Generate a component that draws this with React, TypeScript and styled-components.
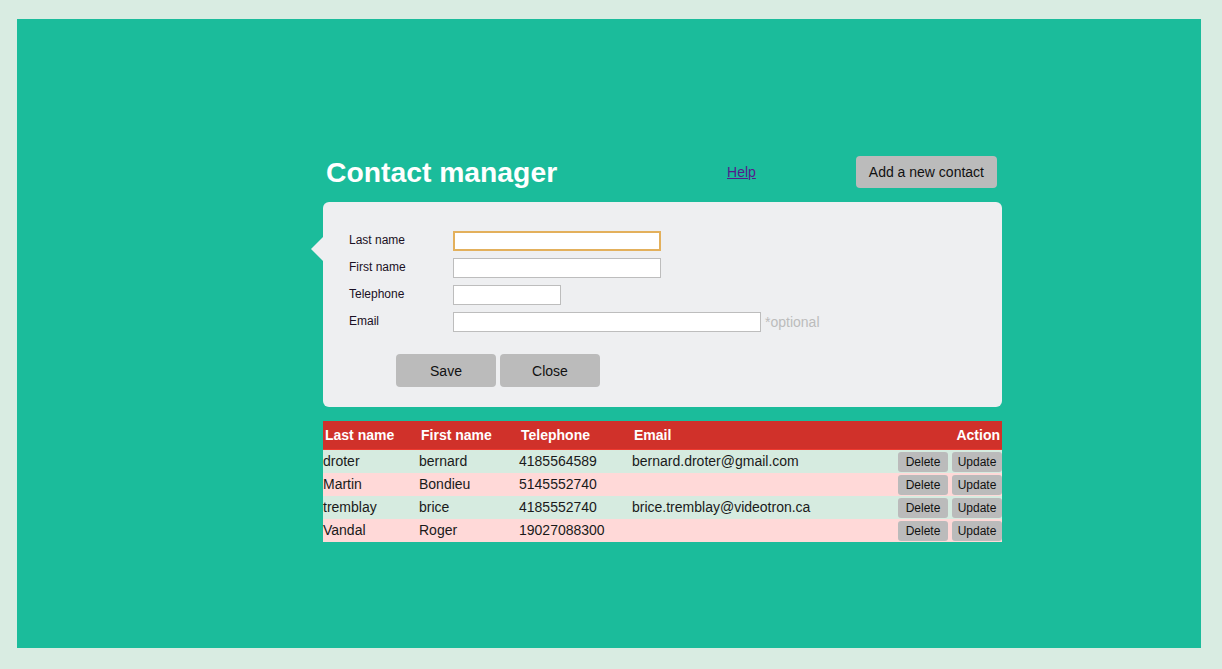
import React from "react"
import styled, { createGlobalStyle } from "styled-components"

const GlobalStyle = createGlobalStyle`
  html, body {
    margin: 0;
    padding: 0;
    background: #d9ece2;
    font-family: "Liberation Sans", Arial, sans-serif;
  }
`

const Page = styled.div`
  padding: 19px 21px 21px 17px;
`

const Stage = styled.div`
  background: #1bbc9b;
  height: 629px;
  padding-top: 137px;
  box-sizing: border-box;
`

const Column = styled.div`
  width: 679px;
  margin-left: 306px;
`

const TopBar = styled.div`
  display: flex;
  align-items: center;
  height: 32px;
`

const Title = styled.h1`
  flex: 1;
  margin: 0 0 0 3px;
  font-size: 28.3px;
  font-weight: bold;
  color: #fff;
`

const HelpLink = styled.a`
  font-size: 14px;
  color: #551a8b;
  text-decoration: underline;
  margin-right: 100px;
  cursor: pointer;
`

const GreyButton = styled.button<{ $w?: number; $h?: number; $size?: number }>`
  width: ${(p) => (p.$w ? `${p.$w}px` : "auto")};
  height: ${(p) => p.$h ?? 32}px;
  padding: 0 ${(p) => (p.$w ? 0 : 13)}px;
  background: #bbbbbb;
  border: none;
  border-radius: 4px;
  font-family: "Liberation Sans", Arial, sans-serif;
  font-size: ${(p) => p.$size ?? 14}px;
  color: #111;
  cursor: pointer;
`

const AddButton = styled(GreyButton)`
  margin-right: 5px;
`

const FormPanel = styled.div`
  position: relative;
  margin-top: 14px;
  background: #eeeff1;
  border-radius: 6px;
  padding: 29px 26px 20px;
  height: 205px;
  box-sizing: border-box;

  &::before {
    content: "";
    position: absolute;
    left: -12px;
    top: 35px;
    border-top: 12px solid transparent;
    border-bottom: 12px solid transparent;
    border-right: 12px solid #eeeff1;
  }
`

const FieldList = styled.div`
  display: flex;
  flex-direction: column;
  gap: 7px;
`

const FieldRow = styled.div`
  display: flex;
  align-items: center;
`

const Label = styled.label`
  width: 104px;
  padding-bottom: 2px;
  font-size: 12px;
  color: #1a1024;
`

const TextInput = styled.input<{ $w: number }>`
  width: ${(p) => p.$w}px;
  height: 20px;
  box-sizing: border-box;
  border: 1px solid #bdbdbd;
  background: #fff;
  padding: 0 3px;
  font-size: 13px;
  outline: none;
  caret-color: #000;

  &:focus {
    border: 2px solid #e3b05c;
    padding: 0 2px;
  }
`

const Hint = styled.span`
  margin-left: 4px;
  font-size: 14px;
  color: #bcbcbc;
`

const FormActions = styled.div`
  display: flex;
  gap: 4px;
  margin: 22px 0 0 47px;
`

const Table = styled.div`
  margin-top: 14px;
`

const GRID = "96px 100px 113px 1fr auto"

const HeadRow = styled.div`
  display: grid;
  grid-template-columns: ${GRID};
  align-items: center;
  height: 29px;
  background: #d0312a;
  border-bottom: 1px solid #ef3a2f;
  box-sizing: border-box;
`

const HeadCell = styled.div<{ $right?: boolean }>`
  padding: 0 2px;
  font-size: 14px;
  font-weight: bold;
  color: #fff;
  text-align: ${(p) => (p.$right ? "right" : "left")};
  grid-column: ${(p) => (p.$right ? "5" : "auto")};
`

const BodyRow = styled.div<{ $odd: boolean }>`
  display: grid;
  grid-template-columns: ${GRID};
  align-items: center;
  height: 23px;
  background: ${(p) => (p.$odd ? "#ffd9d8" : "#d6ebe0")};
`

const Cell = styled.div`
  padding-bottom: 2px;
  font-size: 14px;
  color: #1a1a1a;
  white-space: nowrap;
`

const RowActions = styled.div`
  display: flex;
  gap: 4px;
`

const SmallButton = styled(GreyButton)`
  border-radius: 3px;
`

const contacts = [
  { last: "droter", first: "bernard", tel: "4185564589", email: "bernard.droter@gmail.com" },
  { last: "Martin", first: "Bondieu", tel: "5145552740", email: "" },
  { last: "tremblay", first: "brice", tel: "4185552740", email: "brice.tremblay@videotron.ca" },
  { last: "Vandal", first: "Roger", tel: "19027088300", email: "" },
]

export default function App() {
  return (
    <>
      <GlobalStyle />
      <Page>
        <Stage>
          <Column>
            <TopBar>
              <Title>Contact manager</Title>
              <HelpLink>Help</HelpLink>
              <AddButton>Add a new contact</AddButton>
            </TopBar>

            <FormPanel>
              <FieldList>
                <FieldRow>
                  <Label>Last name</Label>
                  <TextInput $w={208} autoFocus />
                </FieldRow>
                <FieldRow>
                  <Label>First name</Label>
                  <TextInput $w={208} />
                </FieldRow>
                <FieldRow>
                  <Label>Telephone</Label>
                  <TextInput $w={108} />
                </FieldRow>
                <FieldRow>
                  <Label>Email</Label>
                  <TextInput $w={308} />
                  <Hint>*optional</Hint>
                </FieldRow>
              </FieldList>
              <FormActions>
                <GreyButton $w={100} $h={33}>Save</GreyButton>
                <GreyButton $w={100} $h={33}>Close</GreyButton>
              </FormActions>
            </FormPanel>

            <Table>
              <HeadRow>
                <HeadCell>Last name</HeadCell>
                <HeadCell>First name</HeadCell>
                <HeadCell>Telephone</HeadCell>
                <HeadCell>Email</HeadCell>
                <HeadCell $right>Action</HeadCell>
              </HeadRow>
              {contacts.map((c, i) => (
                <BodyRow key={c.tel} $odd={i % 2 === 1}>
                  <Cell>{c.last}</Cell>
                  <Cell>{c.first}</Cell>
                  <Cell>{c.tel}</Cell>
                  <Cell>{c.email}</Cell>
                  <RowActions>
                    <SmallButton $w={50} $h={20} $size={12}>Delete</SmallButton>
                    <SmallButton $w={50} $h={20} $size={12}>Update</SmallButton>
                  </RowActions>
                </BodyRow>
              ))}
            </Table>
          </Column>
        </Stage>
      </Page>
    </>
  )
}
